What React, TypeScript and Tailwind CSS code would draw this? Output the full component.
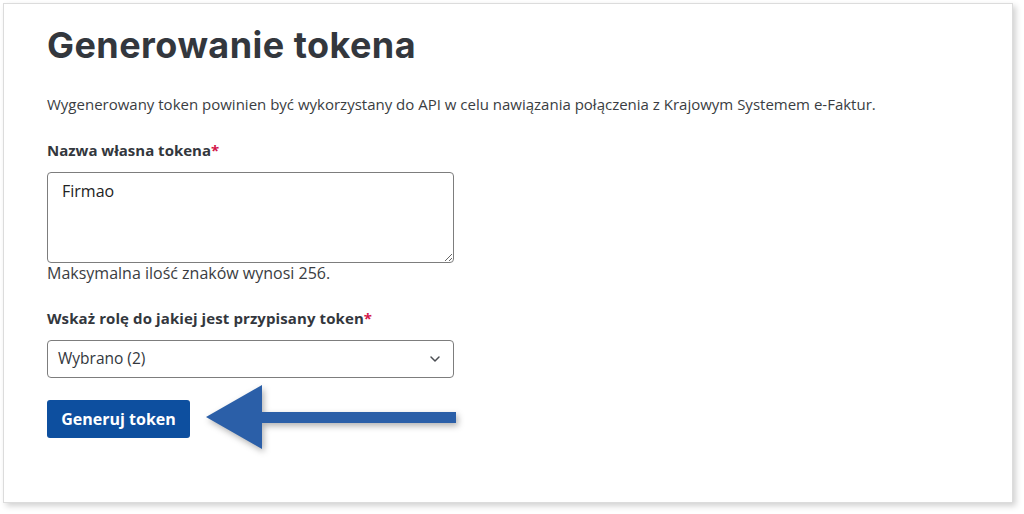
import React from 'react';

const App: React.FC = () => {
  return (
    <div className="w-[1024px] h-[514px] bg-white p-[3px]" style={{ fontFamily: '"Open Sans", sans-serif' }}>
      <div className="w-[1010px] h-[500px] bg-white border border-[#dcdcdc] shadow-[3px_3px_6px_rgba(0,0,0,0.18)] pl-[43px] pt-[19px]">
        <h1 className="text-[36px] leading-[44px] font-bold text-[#33373d] tracking-[0.45px]" style={{ fontFamily: 'Inter, sans-serif' }}>
          Generowanie tokena
        </h1>

        <p className="mt-[27px] text-[15px] leading-[20px] text-[#3a3d42]">
          Wygenerowany token powinien być wykorzystany do API w celu nawiązania połączenia z Krajowym Systemem e-Faktur.
        </p>

        <div className="mt-[26px] text-[15px] leading-[20px] font-bold text-[#33373d]">
          Nazwa własna tokena<span className="text-[#d3164a]">*</span>
        </div>
        <textarea
          defaultValue="Firmao"
          className="mt-[12px] block w-[407px] h-[91px] border border-[#7d7d7d] rounded-[4px] px-[14px] py-[6px] text-[16px] leading-[24px] text-[#222] outline-none"
          style={{ fontFamily: '"Open Sans", sans-serif' }}
        />
        <div className="text-[16px] leading-[20px] text-[#3a3d42]">Maksymalna ilość znaków wynosi 256.</div>

        <div className="mt-[25px] text-[15px] leading-[20px] font-bold text-[#33373d] tracking-[0.1px]">
          Wskaż rolę do jakiej jest przypisany token<span className="text-[#d3164a]">*</span>
        </div>
        <div className="mt-[12px] w-[407px] h-[38px] border border-[#7d7d7d] rounded-[4px] flex items-center justify-between pl-[10px] pr-[10px]">
          <span className="text-[15.5px] text-[#33373d]">Wybrano (2)</span>
          <svg width="16" height="16" viewBox="0 0 24 24" fill="none" stroke="#4a4d52" strokeWidth="2.2" strokeLinecap="round" strokeLinejoin="round">
            <path d="M6 9l6 6 6-6" />
          </svg>
        </div>

        <div className="mt-[22px] flex items-center">
          <button className="w-[143px] h-[38px] rounded-[3px] bg-[#0d4f9f] text-white text-[16px] font-bold" style={{ fontFamily: '"Open Sans", sans-serif' }}>
            Generuj token
          </button>
          <svg width="262" height="72" viewBox="0 0 262 72" className="ml-[14px] -my-[17px]" style={{ filter: 'drop-shadow(2px 3px 3px rgba(0,0,0,0.3))' }}>
            <polygon points="2,34 58,2 58,29 252,29 252,40 58,40 58,66" fill="#2b5fa8" />
          </svg>
        </div>
      </div>
    </div>
  );
};

export default App;
